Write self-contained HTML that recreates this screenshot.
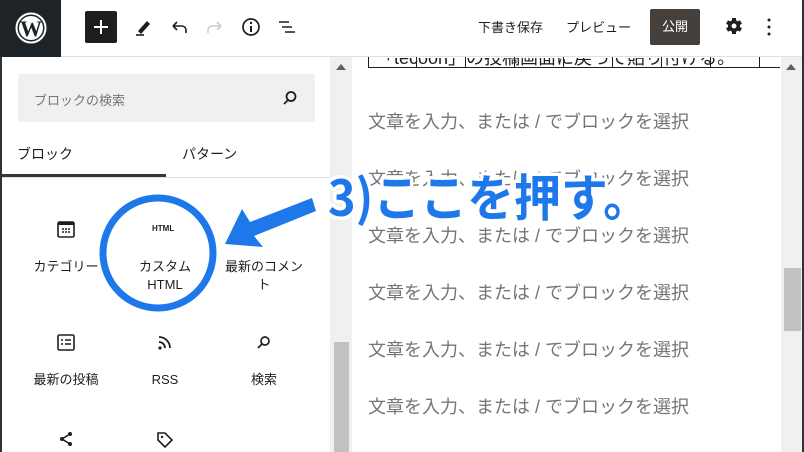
<!DOCTYPE html>
<html><head><meta charset="utf-8"><style>
*{margin:0;padding:0;box-sizing:border-box}
body{width:804px;height:452px;overflow:hidden;background:#fff;font-family:"Liberation Sans","Noto Sans CJK JP",sans-serif;position:relative;color:#1e1e1e}
.a{position:absolute}
.ph{position:absolute;left:368px;font-size:18px;color:#757575;white-space:nowrap;line-height:20px}
.lbl{position:absolute;font-size:13px;color:#1e1e1e;text-align:center;width:100px;line-height:18px}
</style></head><body>
<div class="a" style="left:0;top:0;width:804px;height:57px;border-bottom:1px solid #e0e0e0;background:#fff"></div>
<div class="a" style="left:0;top:0;width:61px;height:57px;background:#1e2327"></div>
<svg class="a" style="left:15px;top:12px" width="32" height="32" viewBox="0 0 32 32"><circle cx="16" cy="16" r="14.5" fill="none" stroke="#fff" stroke-width="2"/><circle cx="16" cy="16" r="12" fill="#fff"/><text x="16" y="24" font-family="Liberation Serif" font-weight="bold" font-size="22" text-anchor="middle" fill="#1e2327">W</text></svg>
<div class="a" style="left:85px;top:11px;width:32px;height:32px;background:#1e1e1e;border-radius:2px"></div>
<svg class="a" style="left:85px;top:11px" width="32" height="32"><path d="M16 9v14M9 16h14" stroke="#fff" stroke-width="2"/></svg>
<svg class="a" style="left:133px;top:16px" width="22" height="22"><path d="M5 15l9-10 3 3-9 10z" fill="#1e1e1e"/><path d="M3 19h8" stroke="#1e1e1e" stroke-width="1.6"/></svg>
<svg class="a" style="left:168px;top:16px" width="22" height="22"><path d="M5 10h9a4 4 0 0 1 4 4v3M5 10l4-4M5 10l4 4" fill="none" stroke="#1e1e1e" stroke-width="1.6"/></svg>
<svg class="a" style="left:204px;top:16px" width="22" height="22"><path d="M17 10H8a4 4 0 0 0-4 4v3M17 10l-4-4M17 10l-4 4" fill="none" stroke="#ccc" stroke-width="1.6"/></svg>
<svg class="a" style="left:240px;top:16px" width="22" height="22"><circle cx="11" cy="11" r="8" fill="none" stroke="#1e1e1e" stroke-width="1.7"/><path d="M11 10v6" stroke="#1e1e1e" stroke-width="2"/><circle cx="11" cy="7" r="1.2" fill="#1e1e1e"/></svg>
<svg class="a" style="left:276px;top:16px" width="22" height="22"><path d="M3 6h10M6 11h10M9 16h10" stroke="#1e1e1e" stroke-width="1.6"/></svg>
<div class="a" style="left:478px;top:17px;font-size:13px;color:#1e1e1e">下書き保存</div>
<div class="a" style="left:566px;top:17px;font-size:13px;color:#1e1e1e">プレビュー</div>
<div class="a" style="left:650px;top:9px;width:50px;height:36px;background:#46403c;border-radius:2px;color:#fff;font-size:13px;text-align:center;line-height:36px">公開</div>
<svg class="a" style="left:724px;top:16px" width="20" height="20" viewBox="0 0 20 20"><g fill="#1e1e1e"><circle cx="10" cy="10" r="6"/><rect x="8" y="2" width="4" height="16"/><rect x="8" y="2" width="4" height="16" transform="rotate(60 10 10)"/><rect x="8" y="2" width="4" height="16" transform="rotate(120 10 10)"/></g><circle cx="10" cy="10" r="2.5" fill="#fff"/></svg>
<svg class="a" style="left:762px;top:16px" width="14" height="22"><circle cx="7" cy="4" r="1.5" fill="#1e1e1e"/><circle cx="7" cy="11" r="1.5" fill="#1e1e1e"/><circle cx="7" cy="18" r="1.5" fill="#1e1e1e"/></svg>
<!-- sidebar -->
<div class="a" style="left:0;top:57px;width:2px;height:395px;background:#2c3338"></div>
<div class="a" style="left:18px;top:74px;width:297px;height:48px;background:#f0f0f0;border-radius:2px"></div>
<div class="a" style="left:34px;top:90px;font-size:13px;color:#757575">ブロックの検索</div>
<svg class="a" style="left:281px;top:89px" width="18" height="18"><circle cx="10" cy="7.5" r="4.5" fill="none" stroke="#1e1e1e" stroke-width="1.8"/><path d="M7 11l-4 4" stroke="#1e1e1e" stroke-width="1.8"/></svg>
<div class="a" style="left:17px;top:144px;font-size:14px">ブロック</div>
<div class="a" style="left:182px;top:144px;font-size:14px">パターン</div>
<div class="a" style="left:2px;top:174px;width:164px;height:4px;background:#3c3633"></div>
<div class="a" style="left:2px;top:177px;width:328px;height:1px;background:#e0e0e0"></div>
<svg class="a" style="left:56px;top:220px" width="20" height="20"><rect x="2" y="2" width="16" height="15" rx="1.5" fill="none" stroke="#1e1e1e" stroke-width="1.6"/><rect x="2" y="2" width="16" height="3" fill="#1e1e1e"/><path d="M6 9h2M9 9h2M12 9h2M6 12h2M9 12h2M12 12h2" stroke="#1e1e1e" stroke-width="1.5"/></svg>
<div class="lbl" style="left:16px;top:258px">カテゴリー</div>
<div class="a" style="left:152px;top:224px;font-size:8px;font-weight:bold">HTML</div>
<div class="lbl" style="left:115px;top:258px">カスタム<br>HTML</div>
<div class="lbl" style="left:214px;top:258px">最新のコメン<br>ト</div>
<svg class="a" style="left:56px;top:333px" width="20" height="20"><rect x="2" y="2" width="16" height="15" rx="1.5" fill="none" stroke="#1e1e1e" stroke-width="1.6"/><path d="M5 7h2M9 7h6M5 11h2M9 11h6" stroke="#1e1e1e" stroke-width="1.6"/></svg>
<div class="lbl" style="left:16px;top:371px">最新の投稿</div>
<svg class="a" style="left:155px;top:333px" width="20" height="20"><circle cx="5" cy="15" r="1.6" fill="#1e1e1e"/><path d="M4 9a6 6 0 0 1 6 6M4 4a11 11 0 0 1 11 11" fill="none" stroke="#1e1e1e" stroke-width="1.8"/></svg>
<div class="lbl" style="left:115px;top:371px">RSS</div>
<svg class="a" style="left:254px;top:333px" width="20" height="20"><circle cx="11" cy="8" r="4" fill="none" stroke="#1e1e1e" stroke-width="1.7"/><path d="M8 11l-4 4" stroke="#1e1e1e" stroke-width="1.7"/></svg>
<div class="lbl" style="left:214px;top:371px">検索</div>
<svg class="a" style="left:56px;top:430px" width="20" height="20"><path d="M14 4L6 9l8 5" fill="none" stroke="#1e1e1e" stroke-width="1.6"/><circle cx="14" cy="4" r="2" fill="#1e1e1e"/><circle cx="6" cy="9" r="2" fill="#1e1e1e"/><circle cx="14" cy="14" r="2" fill="#1e1e1e"/></svg>
<svg class="a" style="left:155px;top:430px" width="20" height="20"><path d="M3 3h7l7 7-7 7-7-7z" fill="none" stroke="#1e1e1e" stroke-width="1.6"/><circle cx="7" cy="7" r="1.2" fill="#1e1e1e"/></svg>
<!-- sidebar scrollbar -->
<div class="a" style="left:330px;top:57px;width:22px;height:395px;background:#f0f0f0"></div>
<div class="a" style="left:334px;top:342px;width:15px;height:110px;background:#c1c1c1"></div>
<div class="a" style="left:336px;top:64px;width:0;height:0;border-left:5px solid transparent;border-right:5px solid transparent;border-bottom:6px solid #606060"></div>
<!-- editor -->
<div class="a" style="left:368px;top:58px;width:360px;height:18px;overflow:hidden">
<div style="position:absolute;left:8px;top:-10px;font-size:18px;color:#1e1e1e;white-space:nowrap;line-height:20px">「tecoon」の投稿画面に戻って貼り付ける。</div></div>
<div class="a" style="left:368px;top:57px;width:412px;height:11px;border-left:1px solid #1e1e1e;border-bottom:1px solid #1e1e1e"></div>
<div class="a" style="left:416px;top:57px;width:1px;height:11px;background:#1e1e1e;box-shadow:49px 0 #1e1e1e,98px 0 #1e1e1e,147px 0 #1e1e1e,196px 0 #1e1e1e,245px 0 #1e1e1e,294px 0 #1e1e1e,343px 0 #1e1e1e"></div>
<div class="ph" style="top:112px">文章を入力、または / でブロックを選択</div>
<div class="ph" style="top:169px">文章を入力、または / でブロックを選択</div>
<div class="ph" style="top:226px">文章を入力、または / でブロックを選択</div>
<div class="ph" style="top:283px">文章を入力、または / でブロックを選択</div>
<div class="ph" style="top:340px">文章を入力、または / でブロックを選択</div>
<div class="ph" style="top:397px">文章を入力、または / でブロックを選択</div>
<div class="a" style="left:781px;top:57px;width:21px;height:395px;background:#f0f0f0"></div>
<div class="a" style="left:784px;top:268px;width:17px;height:63px;background:#c1c1c1"></div>
<div class="a" style="left:786px;top:64px;width:0;height:0;border-left:5px solid transparent;border-right:5px solid transparent;border-bottom:6px solid #606060"></div>
<div class="a" style="left:802px;top:0;width:2px;height:452px;background:#2c3338"></div>
<!-- overlay -->
<svg class="a" style="left:0;top:0" width="804" height="452">
<circle cx="158" cy="253" r="55" fill="none" stroke="#1f78ea" stroke-width="7"/>
<path d="M312 198L250 222l-8-13-17 35 38 3-9-11 62-25z" fill="#1f78ea"/>
<text x="328" y="216" font-family="Noto Sans CJK JP,sans-serif" font-weight="bold" font-size="50" textLength="322" lengthAdjust="spacingAndGlyphs" fill="#1f78ea" stroke="#fff" stroke-width="7" paint-order="stroke" stroke-linejoin="round">3)ここを押す。</text>
</svg>
</body></html>
